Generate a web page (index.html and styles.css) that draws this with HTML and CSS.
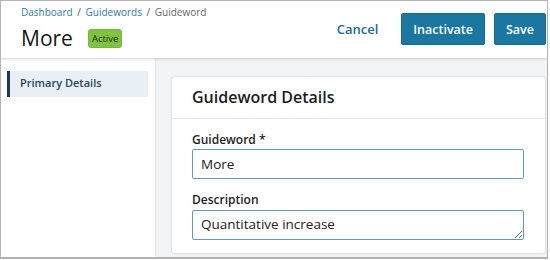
FILE: index.html
```html
<!DOCTYPE html>
<html lang="en">
<head>
    <meta charset="UTF-8">
    <title>Guideword - More</title>
    <link rel="stylesheet" href="styles.css">
</head>
<body>
    <div class="frame">
        <header class="page-header">
            <div class="title-block">
                <nav class="crumbs">
                    <a href="#">Dashboard</a>
                    <span class="sep">/</span>
                    <a href="#">Guidewords</a>
                    <span class="sep">/</span>
                    <span class="current">Guideword</span>
                </nav>
                <div class="title-row">
                    <h1>More</h1>
                    <span class="badge">Active</span>
                </div>
            </div>
            <div class="actions">
                <button class="link-btn">Cancel</button>
                <button class="btn">Inactivate</button>
                <button class="btn">Save</button>
            </div>
        </header>
        <div class="content">
            <aside class="sidebar">
                <div class="side-item">Primary Details</div>
            </aside>
            <main class="main">
                <section class="card">
                    <h2 class="card-title">Guideword Details</h2>
                    <div class="card-body">
                        <label class="field-label" for="gw">Guideword *</label>
                        <input class="field" id="gw" type="text" value="More">
                        <label class="field-label" for="desc">Description</label>
                        <textarea class="field area" id="desc">Quantitative increase</textarea>
                    </div>
                </section>
            </main>
        </div>
    </div>
</body>
</html>
```

FILE: styles.css
```css
html, body {
    margin: 0;
    background: #ffffff;
}
body {
    font-family: 'Open Sans', 'Liberation Sans', sans-serif;
    color: #1f1f1f;
}
.frame {
    width: 548px;
    height: 259px;
    box-sizing: border-box;
    border: 1px solid #b3b3b3;
    border-bottom-width: 2px;
    display: flex;
    flex-direction: column;
    overflow: hidden;
}
.page-header {
    height: 57px;
    flex-shrink: 0;
    display: flex;
    justify-content: space-between;
    align-items: flex-start;
    padding: 0 1px 0 20px;
    background: #fff;
    box-shadow: 0 1px 3px rgba(0, 0, 0, 0.18);
    position: relative;
    z-index: 1;
}
.crumbs {
    font-size: 10px;
    line-height: 14px;
    margin-top: 4px;
    color: #666;
}
.crumbs a {
    color: #2b7ea6;
    text-decoration: none;
}
.crumbs .sep {
    margin: 0 2px;
    color: #555;
}
.title-row {
    display: flex;
    align-items: center;
    margin-top: 6px;
}
h1 {
    margin: 0;
    font-size: 21px;
    font-weight: 400;
    line-height: 26px;
    color: #151515;
}
.badge {
    margin-left: 15px;
    background: #80c342;
    color: #1f2d12;
    font-size: 9.5px;
    line-height: 15px;
    padding: 1px 3px;
    border-radius: 3px;
    border: 1px solid #74b93a;
}
.actions {
    display: flex;
    align-items: center;
    margin-top: 12px;
}
.link-btn {
    background: none;
    border: 0;
    font-family: inherit;
    font-size: 13px;
    font-weight: 600;
    color: #1b6d95;
    padding: 0;
    margin-right: 14px;
}
.btn {
    font-family: inherit;
    font-size: 12.5px;
    font-weight: 600;
    color: #fff;
    background: #1a77a2;
    border: 1px solid #16698f;
    border-radius: 2px;
    height: 32px;
    padding: 0 11px;
    margin-left: 9px;
}
.content {
    flex: 1;
    display: flex;
    min-height: 0;
}
.sidebar {
    width: 155px;
    flex-shrink: 0;
    box-sizing: border-box;
    border-right: 1px solid #e4e5e8;
    padding: 13px 7px 0 6px;
    background: #fff;
}
.side-item {
    background: #e8f0f6;
    border-left: 3px solid #1e3a4c;
    height: 26px;
    line-height: 23px;
    padding-left: 10px;
    font-size: 11px;
    font-weight: 600;
    color: #2d475a;
}
.main {
    flex: 1;
    background: #f3f4f6;
    padding: 18px 1px 0 15px;
}
.card {
    background: #fff;
    border: 1px solid #e1e2e5;
    border-radius: 3px;
    box-shadow: 0 0 2px rgba(0, 0, 0, 0.06);
}
.card-title {
    margin: 0;
    height: 41px;
    line-height: 40px;
    padding-left: 20px;
    font-size: 16px;
    font-weight: 600;
    color: #1c1c1c;
    border-bottom: 1px solid #e3e4e6;
}
.card-body {
    display: flex;
    flex-direction: column;
    padding: 13px 21px 13px 20px;
}
.field-label {
    font-size: 12px;
    font-weight: 600;
    line-height: 16px;
    color: #1f1f1f;
    margin-bottom: 1px;
}
.field {
    font-family: inherit;
    font-size: 13.5px;
    color: #222;
    height: 30px;
    box-sizing: border-box;
    border: 1px solid #5e9cc0;
    border-radius: 2px;
    padding: 0 8px;
    margin: 0 0 13px;
}
.area {
    height: 30px;
    margin: 1px 0 0;
    padding-top: 5px;
    line-height: 17px;
    resize: vertical;
}
```
